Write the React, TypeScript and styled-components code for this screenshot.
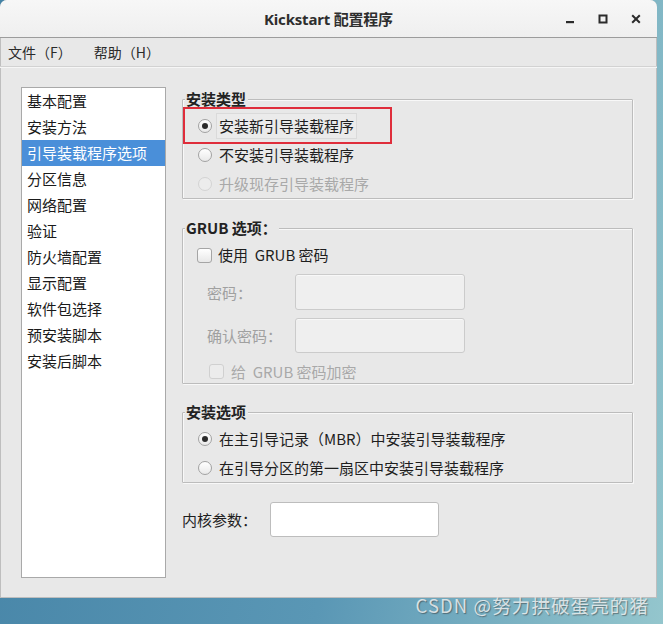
import React from "react";
import styled, { createGlobalStyle, css } from "styled-components";

const GlobalStyle = createGlobalStyle`
  html, body { margin: 0; padding: 0; height: 100%; }
  body {
    background: linear-gradient(100deg, #4583a6 0%, #5a97b5 55%, #94c6cd 100%);
    font-family: "Noto Sans CJK SC", "Noto Sans", sans-serif;
    overflow: hidden;
  }
  #root { height: 100%; }
`;

const Page = styled.div`
  position: relative;
  width: 663px;
  height: 624px;
`;

const Window = styled.div`
  width: 657px;
  height: 598px;
  display: flex;
  flex-direction: column;
  background: #e8e8e8;
  border-radius: 7px 7px 0 0;
  overflow: hidden;
  box-shadow: inset 0 0 0 1px rgba(0, 0, 0, 0.18);
`;

const TitleBar = styled.div`
  height: 37px;
  display: grid;
  grid-template-columns: 1fr auto 1fr;
  align-items: center;
  background: linear-gradient(#f7f7f7, #efefef);
  border-bottom: 1px solid #9c9c9c;
  padding: 0 8px;
`;

const Title = styled.div`
  grid-column: 2;
  font-family: "Noto Sans", "Noto Sans CJK SC", sans-serif;
  font-weight: 700;
  font-size: 15px;
  color: #2e2e2e;
  letter-spacing: -0.2px;
`;

const WinButtons = styled.div`
  grid-column: 3;
  justify-self: end;
  display: flex;
  gap: 7px;
`;

const WinButton = styled.div`
  width: 26px;
  height: 26px;
  display: flex;
  align-items: center;
  justify-content: center;
  color: #2b2b2b;
`;

const MenuBar = styled.div`
  height: 28px;
  display: flex;
  align-items: center;
  gap: 22px;
  padding-left: 8px;
  border-bottom: 1px solid #d2d2d2;
  box-shadow: 0 1px 0 #f6f6f6;
`;

const MenuItem = styled.span`
  font-size: 14px;
  color: #2a2a2a;
`;

const Content = styled.div`
  flex: 1;
  display: flex;
  gap: 16px;
  padding: 20px 24px 20px 21px;
`;

const SideList = styled.div`
  width: 145px;
  height: 491px;
  box-sizing: border-box;
  background: #fff;
  border: 1px solid #a9a9a9;
  display: flex;
  flex-direction: column;
`;

const SideItem = styled.div<{ $selected?: boolean }>`
  height: 26px;
  line-height: 25px;
  padding-left: 5px;
  font-size: 15px;
  color: #1a1a1a;
  white-space: nowrap;
  ${(p) =>
    p.$selected &&
    css`
      background: #4a8fd9;
      color: #fff;
    `}
`;

const RightCol = styled.div`
  width: 451px;
  display: flex;
  flex-direction: column;
  padding-top: 12px;
`;

const Frame = styled.div<{ $gap?: number; $pt: number }>`
  position: relative;
  margin-top: ${(p) => p.$gap ?? 0}px;
  border: 1px solid #bcbcbc;
  border-radius: 1px;
  box-shadow: inset 1px 1px 0 #f8f8f8, 1px 1px 0 #f8f8f8;
  padding-top: ${(p) => p.$pt}px;
  display: flex;
  flex-direction: column;
`;

const FrameLabel = styled.div`
  position: absolute;
  top: -11px;
  left: 2px;
  padding: 0 2px 0 1px;
  background: #e8e8e8;
  font-size: 15px;
  font-weight: 700;
  line-height: 20px;
  color: #222;
  white-space: pre;
`;

const Highlight = styled.div`
  position: absolute;
  top: 7px;
  left: 0px;
  width: 205px;
  height: 33px;
  border: 2px solid #df2d3b;
  pointer-events: none;
`;

const OptionRow = styled.div<{ $h: number; $indent: number; $gap: number; $mt?: number }>`
  height: ${(p) => p.$h}px;
  margin-top: ${(p) => p.$mt ?? 0}px;
  display: flex;
  align-items: center;
  padding-left: ${(p) => p.$indent}px;
  gap: ${(p) => p.$gap}px;
`;

const Radio = styled.span<{ $checked?: boolean; $disabled?: boolean }>`
  width: 14px;
  height: 14px;
  box-sizing: border-box;
  border-radius: 50%;
  border: 1px solid ${(p) => (p.$disabled ? "#d3d3d3" : "#a2a2a2")};
  background: ${(p) =>
    p.$disabled ? "#ececec" : "linear-gradient(#ffffff, #e9e9e9)"};
  display: flex;
  align-items: center;
  justify-content: center;
  flex: none;
  &::after {
    content: "";
    display: ${(p) => (p.$checked ? "block" : "none")};
    width: 6px;
    height: 6px;
    border-radius: 50%;
    background: #2c2c2c;
  }
`;

const Check = styled.span<{ $disabled?: boolean }>`
  width: 15px;
  height: 15px;
  box-sizing: border-box;
  border-radius: 3px;
  border: 1px solid ${(p) => (p.$disabled ? "#d0d0d0" : "#a5a5a5")};
  background: ${(p) =>
    p.$disabled ? "#ececec" : "linear-gradient(#ffffff, #e8e8e8)"};
  flex: none;
`;

const OptionText = styled.span<{ $disabled?: boolean; $focused?: boolean }>`
  font-size: 15px;
  line-height: 22px;
  padding: 1px 2px;
  border: 1px solid transparent;
  color: ${(p) => (p.$disabled ? "#a9a9a9" : "#1e1e1e")};
  white-space: pre;
  ${(p) =>
    p.$focused &&
    css`
      border-color: rgba(0, 0, 0, 0.07);
      background: #ebebeb;
    `}
`;

const FieldRow = styled.div<{ $mt: number; $indent: number; $labelW: number }>`
  margin-top: ${(p) => p.$mt}px;
  display: grid;
  grid-template-columns: ${(p) => p.$labelW}px auto;
  align-items: center;
  padding-left: ${(p) => p.$indent}px;
`;

const FieldLabel = styled.span<{ $disabled?: boolean }>`
  font-size: 15px;
  color: ${(p) => (p.$disabled ? "#a0a0a0" : "#1e1e1e")};
`;

const Entry = styled.div<{ $disabled?: boolean; $w: number; $h: number }>`
  width: ${(p) => p.$w}px;
  height: ${(p) => p.$h}px;
  box-sizing: border-box;
  border-radius: 3px;
  border: 1px solid ${(p) => (p.$disabled ? "#cbcbcb" : "#bdbdbd")};
  background: ${(p) => (p.$disabled ? "#efefef" : "#ffffff")};
  box-shadow: ${(p) => (p.$disabled ? "inset 0 1px 0 #f8f8f8" : "none")};
`;

const Watermark = styled.div`
  position: absolute;
  right: 14px;
  bottom: 9px;
  font-family: "Noto Sans CJK SC", "Noto Sans", sans-serif;
  font-size: 18.5px;
  line-height: 20px;
  letter-spacing: 1.1px;
  color: rgba(238, 240, 240, 0.85);
  text-shadow: 1px 1px 1px rgba(50, 50, 50, 0.5);
  white-space: nowrap;
`;

const sideItems = [
  "基本配置",
  "安装方法",
  "引导装载程序选项",
  "分区信息",
  "网络配置",
  "验证",
  "防火墙配置",
  "显示配置",
  "软件包选择",
  "预安装脚本",
  "安装后脚本",
];

export default function App() {
  return (
    <Page>
      <GlobalStyle />
      <Window>
        <TitleBar>
          <Title>Kickstart 配置程序</Title>
          <WinButtons>
            <WinButton>
              <svg width="10" height="10" viewBox="0 0 10 10">
                <rect x="1" y="7" width="8" height="2.2" fill="currentColor" />
              </svg>
            </WinButton>
            <WinButton>
              <svg width="10" height="10" viewBox="0 0 10 10">
                <rect x="1.5" y="1.5" width="7" height="7" fill="none" stroke="currentColor" strokeWidth="2" />
              </svg>
            </WinButton>
            <WinButton>
              <svg width="10" height="10" viewBox="0 0 10 10">
                <path d="M1.2 1.2 L8.8 8.8 M8.8 1.2 L1.2 8.8" stroke="currentColor" strokeWidth="2" />
              </svg>
            </WinButton>
          </WinButtons>
        </TitleBar>
        <MenuBar>
          <MenuItem>文件（F）</MenuItem>
          <MenuItem>帮助（H）</MenuItem>
        </MenuBar>
        <Content>
          <SideList>
            {sideItems.map((s, i) => (
              <SideItem key={s} $selected={i === 2}>
                {s}
              </SideItem>
            ))}
          </SideList>
          <RightCol>
            <Frame $pt={11}>
              <FrameLabel>安装类型</FrameLabel>
              <OptionRow $h={29} $indent={15} $gap={4}>
                <Radio $checked />
                <OptionText $focused>安装新引导装载程序</OptionText>
              </OptionRow>
              <OptionRow $h={29} $indent={15} $gap={4}>
                <Radio />
                <OptionText>不安装引导装载程序</OptionText>
              </OptionRow>
              <OptionRow $h={29} $indent={15} $gap={4}>
                <Radio $disabled />
                <OptionText $disabled>升级现存引导装载程序</OptionText>
              </OptionRow>
              <Highlight />
            </Frame>

            <Frame $gap={29} $pt={12}>
              <FrameLabel>GRUB 选项：</FrameLabel>
              <OptionRow $h={28} $indent={14} $gap={3}>
                <Check />
                <OptionText>使用  GRUB 密码</OptionText>
              </OptionRow>
              <FieldRow $mt={5} $indent={24} $labelW={88}>
                <FieldLabel $disabled>密码：</FieldLabel>
                <Entry $disabled $w={170} $h={36} />
              </FieldRow>
              <FieldRow $mt={8} $indent={24} $labelW={88}>
                <FieldLabel $disabled>确认密码：</FieldLabel>
                <Entry $disabled $w={170} $h={35} />
              </FieldRow>
              <OptionRow $h={23} $indent={26} $gap={4} $mt={7}>
                <Check $disabled />
                <OptionText $disabled>给  GRUB 密码加密</OptionText>
              </OptionRow>
            </Frame>

            <Frame $gap={28} $pt={11}>
              <FrameLabel>安装选项</FrameLabel>
              <OptionRow $h={29} $indent={15} $gap={4}>
                <Radio $checked />
                <OptionText>在主引导记录（MBR）中安装引导装载程序</OptionText>
              </OptionRow>
              <OptionRow $h={29} $indent={15} $gap={4}>
                <Radio />
                <OptionText>在引导分区的第一扇区中安装引导装载程序</OptionText>
              </OptionRow>
            </Frame>

            <FieldRow $mt={19} $indent={0} $labelW={88}>
              <FieldLabel>内核参数：</FieldLabel>
              <Entry $w={169} $h={35} />
            </FieldRow>
          </RightCol>
        </Content>
      </Window>
      <Watermark>CSDN @努力拱破蛋壳的猪</Watermark>
    </Page>
  );
}
